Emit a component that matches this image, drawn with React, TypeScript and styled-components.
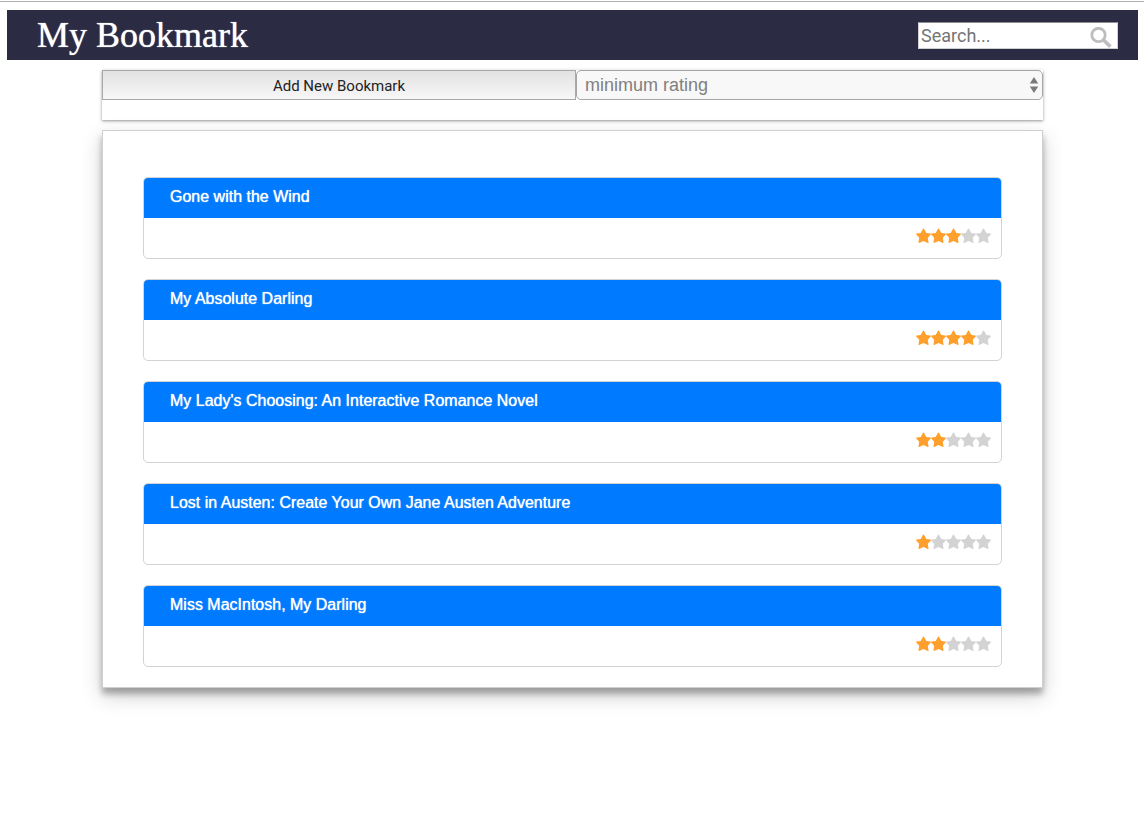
import React, { useState } from "react";
import styled, { createGlobalStyle } from "styled-components";

const GlobalStyle = createGlobalStyle`
  *, *::before, *::after { box-sizing: border-box; }
  body {
    margin: 0;
    background: #fff;
    font-family: "Liberation Sans", Arial, sans-serif;
  }
`;

const Page = styled.div`
  margin-top: 1px;
  padding: 8px 6px 40px 7px;
  border-top: 1px solid #b0b0b0;
`;

const Header = styled.header`
  display: flex;
  align-items: center;
  justify-content: space-between;
  height: 50px;
  padding: 0 20px 0 30px;
  background: #2b2c43;
`;

const Title = styled.h1`
  margin: 0;
  color: #fff;
  font: 400 36px/50px "Liberation Serif", "Times New Roman", serif;
  text-shadow: 0 0 1px #fff;
`;

const SearchForm = styled.form`
  display: flex;
  align-items: center;
  width: 200px;
  height: 27px;
  margin-top: 1px;
  border: 1px solid #d0d0d0;
  border-top: 1px solid #8c8c8c;
  background: #fff;
`;

const SearchInput = styled.input`
  flex: 1;
  min-width: 0;
  height: 25px;
  padding: 0 2px;
  border: 0;
  outline: 0;
  background: transparent;
  font: 400 18px/25px Roboto, sans-serif;
  &::placeholder { color: #757575; opacity: 1; }
`;

const SearchButton = styled.button`
  display: flex;
  padding: 3px 5px 0 0;
  border: 0;
  background: transparent;
  cursor: pointer;
`;

const Content = styled.main`
  margin: 10px 95px 0;
`;

const Controls = styled.section`
  display: grid;
  grid-template-columns: 474px 1fr;
  height: 50px;
  align-items: start;
  box-shadow: 0 1px 4px rgba(0, 0, 0, 0.22), 0 1px 2px rgba(0, 0, 0, 0.24);
  @media (max-width: 900px) { grid-template-columns: 1fr 1fr; }
`;

const AddButton = styled.button`
  height: 30px;
  padding: 2px 0 0;
  border: 1px solid #a9a9a9;
  background: linear-gradient(#e2e2e2, #f7f7f7);
  color: #222;
  font: 400 15px/20px Roboto, sans-serif;
  cursor: pointer;
`;

const SelectWrap = styled.div`
  display: grid;
  align-items: center;
  & > * { grid-area: 1 / 1; }
  & > svg { justify-self: end; margin-right: 4px; pointer-events: none; }
`;

const RatingSelect = styled.select`
  width: 100%;
  height: 30px;
  padding: 0 20px 0 8px;
  appearance: none;
  border: 1px solid #a6a6a6;
  border-radius: 5px;
  background: #f8f8f8;
  color: #808080;
  font: 400 18px/28px "Liberation Sans", Arial, sans-serif;
`;

const Panel = styled.ul`
  display: flex;
  flex-direction: column;
  gap: 20px;
  margin: 10px 0 0;
  padding: 46px 40px 20px;
  list-style: none;
  border: 1px solid #d0d0d0;
  box-shadow: 0 6px 6px rgba(0, 0, 0, 0.28), 0 8px 20px rgba(0, 0, 0, 0.19);
`;

const Card = styled.li`
  height: 82px;
  overflow: hidden;
  border: 1px solid #d3d3d3;
  border-radius: 5px;
`;

const CardTitle = styled.h2`
  height: 40px;
  margin: 0;
  padding: 0 26px;
  background: #007bff;
  color: #fff;
  font: 400 16px/37px "Liberation Sans", Arial, sans-serif;
  text-shadow: 0 0 1px #fff;
`;

const Rating = styled.div`
  display: flex;
  justify-content: flex-end;
  padding: 10px 10px 0;
`;

const Star = styled.svg<{ $on: boolean }>`
  display: block;
  width: 15px;
  height: 16px;
  fill: ${(p) => (p.$on ? "#ffa02c" : "#d3d3d3")};
`;

const bookmarks = [
  { title: "Gone with the Wind", rating: 3 },
  { title: "My Absolute Darling", rating: 4 },
  { title: "My Lady's Choosing: An Interactive Romance Novel", rating: 2 },
  { title: "Lost in Austen: Create Your Own Jane Austen Adventure", rating: 1 },
  { title: "Miss MacIntosh, My Darling", rating: 2 },
];

export default function App() {
  const [minimum, setMinimum] = useState("0");
  const [query, setQuery] = useState("");
  const visible = bookmarks.filter(
    (b) =>
      b.rating >= Number(minimum) &&
      b.title.toLowerCase().includes(query.toLowerCase())
  );

  return (
    <>
      <GlobalStyle />
      <Page>
        <Header>
          <Title>My Bookmark</Title>
          <SearchForm role="search" onSubmit={(e) => e.preventDefault()}>
            <SearchInput
              type="text"
              aria-label="Search bookmarks"
              placeholder="Search..."
              value={query}
              onChange={(e) => setQuery(e.target.value)}
            />
            <SearchButton type="submit" aria-label="Search">
              <svg width="22" height="21" viewBox="0 0 22 21" fill="none" stroke="#bdbdbd">
                <circle cx="8.5" cy="8" r="6.7" strokeWidth="2.8" />
                <path d="M13.5 13L20.4 19.6" strokeWidth="3.8" />
              </svg>
            </SearchButton>
          </SearchForm>
        </Header>
        <Content>
          <Controls>
            <AddButton type="button">Add New Bookmark</AddButton>
            <SelectWrap>
              <RatingSelect
                aria-label="Minimum rating"
                value={minimum}
                onChange={(e) => setMinimum(e.target.value)}
              >
                <option value="0">minimum rating</option>
                {[1, 2, 3, 4, 5].map((n) => (
                  <option key={n} value={n}>{n}</option>
                ))}
              </RatingSelect>
              <svg width="10" height="16" viewBox="0 0 10 16" fill="#7a7a7a" aria-hidden="true">
                <path d="M5 0L9.2 6.5H0.8ZM5 16L0.8 9.5H9.2Z" />
              </svg>
            </SelectWrap>
          </Controls>
          <Panel>
            {visible.map((b) => (
              <Card key={b.title}>
                <CardTitle>{b.title}</CardTitle>
                <Rating role="img" aria-label={`${b.rating} out of 5 stars`}>
                  {[1, 2, 3, 4, 5].map((n) => (
                    <Star key={n} $on={n <= b.rating} viewBox="0 0 15 16">
                      <path d="M7 0.8Q7.5 0.1 8 0.8L10.3 5L14.5 5.6Q15.2 5.8 14.8 6.4L11.8 9.8L12.5 14.4Q12.5 15.1 11.8 14.9L7.5 13L3.2 14.9Q2.5 15.1 2.5 14.4L3.2 9.8L0.2 6.4Q-0.2 5.8 0.5 5.6L4.7 5Z" />
                    </Star>
                  ))}
                </Rating>
              </Card>
            ))}
          </Panel>
        </Content>
      </Page>
    </>
  );
}
